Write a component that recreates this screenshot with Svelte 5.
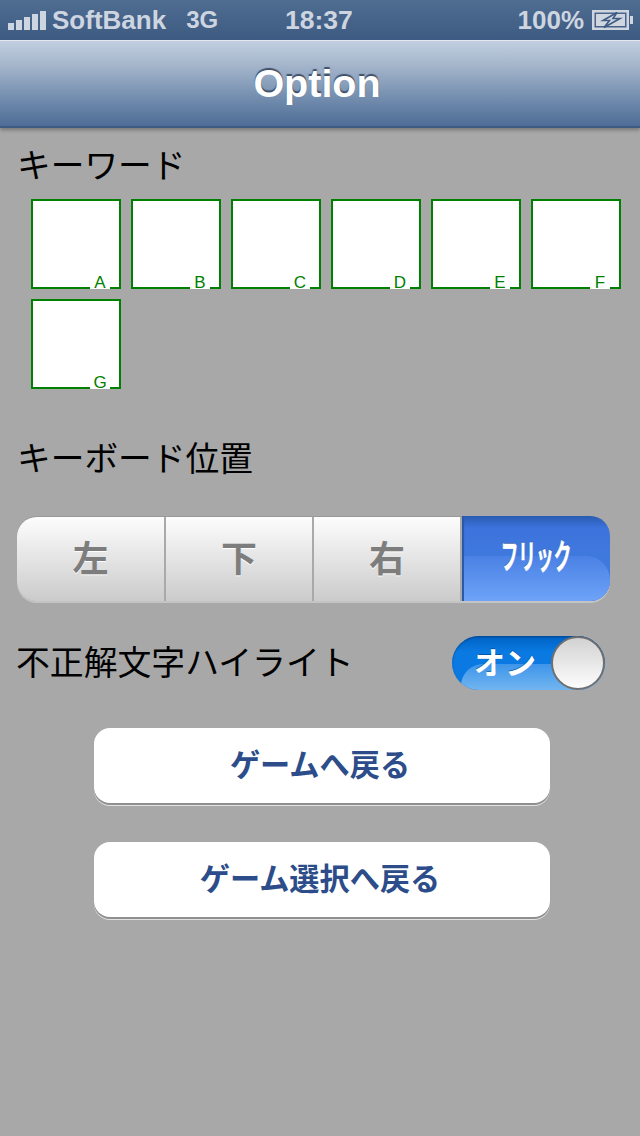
<script>
  const cells = ['A', 'B', 'C', 'D', 'E', 'F', 'G'];
  const segments = ['左', '下', '右'];
</script>

<div class="page">
  <header class="status">
    <div class="left">
      <svg class="signal" width="38" height="20" viewBox="0 0 38 20" aria-hidden="true">
        <rect x="0" y="12" width="6" height="7" />
        <rect x="8" y="9" width="6" height="10" />
        <rect x="16" y="6" width="6" height="13" />
        <rect x="24" y="3" width="6" height="16" />
        <rect x="32" y="0" width="6" height="19" />
      </svg>
      <span class="carrier">SoftBank</span>
      <span class="net">3G</span>
    </div>
    <span class="time">18:37</span>
    <div class="right">
      <span class="pct">100%</span>
      <svg class="battery" width="41" height="20" viewBox="0 0 41 20" aria-hidden="true">
        <path fill="#cfd6e0" fill-rule="evenodd" d="M0 0h37v20H0zM2.500 2.500v15h32v-15z" />
        <path fill="#cfd6e0" d="M4 4h29v12H4z" />
        <path fill="#cfd6e0" d="M38 6h3v8h-3z" />
        <path fill="#cfd6e0" stroke="#3f5c84" stroke-width="1.600" d="M25 2.500 11 10.500h6.500L12 17.500 28 8.500h-7z" />
      </svg>
    </div>
  </header>

  <div class="nav"><h1>Option</h1></div>

  <main class="content">
    <p class="label keyword">キーワード</p>
    <div class="grid">
      {#each cells as c}
        <div class="cell"><span>{c}</span></div>
      {/each}
    </div>

    <p class="label position">キーボード位置</p>
    <div class="segments">
      {#each segments as s}
        <div class="seg"><span class="glyph">{s}</span></div>
      {/each}
      <div class="seg active"><span class="flick">フリック</span></div>
    </div>

    <div class="highlight">
      <p class="label hl-label">不正解文字ハイライト</p>
      <div class="switch">
        <span class="on">オン</span>
        <span class="knob"></span>
      </div>
    </div>

    <button class="action first">ゲームへ戻る</button>
    <button class="action second">ゲーム選択へ戻る</button>
  </main>
</div>

<style>
  :global(body) {
    margin: 0;
    background: #a8a8a8;
  }
  .page {
    width: 640px;
    height: 1136px;
    overflow: hidden;
    background: #a8a8a8;
    font-family: "Noto Sans CJK JP", "Liberation Sans", sans-serif;
  }
  .status {
    height: 40px;
    box-sizing: border-box;
    padding: 0 7px 0 8px;
    position: relative;
    display: flex;
    align-items: center;
    justify-content: space-between;
    background: linear-gradient(#4f6c91, #3d5a82);
    color: #cdd5e0;
    font-family: "Liberation Sans", sans-serif;
    font-weight: 700;
    font-size: 26px;
  }
  .left, .right {
    display: flex;
    align-items: center;
  }
  .signal {
    fill: #cdd5e0;
    margin-right: 6px;
    margin-top: 1px;
  }
  .net {
    font-size: 24px;
    margin-left: 20px;
  }
  .time {
    position: absolute;
    left: 285px;
    top: 5px;
    font-size: 26.500px;
  }
  .pct {
    margin-right: 8px;
  }
  .battery {
    margin-top: -1px;
  }
  .nav {
    height: 88px;
    box-sizing: border-box;
    border-top: 1px solid #e4e9f0;
    background: linear-gradient(#c1cfe0, #a3b4ca 30%, #6f8aac 70%, #4e6c96);
    border-bottom: 2px solid #3f5a80;
    box-shadow: 0 2px 4px rgba(0, 0, 0, 0.3);
    display: flex;
    align-items: center;
    justify-content: center;
  }
  h1 {
    margin: 0 6px 0 0;
    color: #fff;
    font-family: "Liberation Sans", sans-serif;
    font-weight: 700;
    font-size: 39.500px;
    text-shadow: 0 -2px 1px #3f4f68;
  }
  .content {
    padding: 0 0 0 18px;
  }
  .label {
    margin: 0;
    font-size: 33.700px;
    line-height: 46px;
    color: #000;
  }
  .keyword {
    padding-top: 13px;
    margin-left: -1px;
  }
  .grid {
    display: flex;
    flex-wrap: wrap;
    gap: 10px;
    width: 600px;
    margin: 12px 0 0 13px;
  }
  .cell {
    width: 90px;
    height: 90px;
    box-sizing: border-box;
    border: 2px solid #008000;
    background: #fff;
    position: relative;
  }
  .cell span {
    position: absolute;
    right: 9px;
    bottom: -2px;
    width: 20px;
    height: 14px;
    background: #fff;
    text-align: center;
    color: #008000;
    font-family: "Liberation Sans", sans-serif;
    font-size: 17px;
    line-height: 16px;
  }
  .position {
    margin: 45px 0 0 -1px;
  }
  .segments {
    display: flex;
    width: 593px;
    height: 85px;
    margin: 36px 0 0 -1px;
    box-sizing: border-box;
    border-radius: 20px;
    box-shadow: 0 2px 0 #c4c4c4;
    border-top: 1px solid #999;
  }
  .seg {
    width: 149px;
    box-sizing: border-box;
    display: flex;
    align-items: center;
    justify-content: center;
    border-right: 2px solid #a9a9a9;
    background: linear-gradient(#fdfdfd, #cbcbcb);
    color: #7d7d7d;
    font-size: 36px;
    font-weight: 700;
    text-shadow: 0 1px 0 #fff;
  }
  .seg:nth-child(2) {
    width: 148px;
  }
  .seg:nth-child(3) {
    width: 148px;
  }
  .seg:first-child {
    border-radius: 20px 0 0 20px;
  }
  .glyph {
    padding-bottom: 6px;
  }
  .active {
    width: 148px;
    position: relative;
    overflow: hidden;
    margin-top: -1px;
    border-right: 0;
    border-radius: 0 20px 20px 0;
    background: linear-gradient(#2a5cb2, #3c73dc 14%, #4079de 48%);
    color: #fff;
    text-shadow: 0 -1px 0 #2a4f99;
    box-shadow: inset 2px 0 1px #2a57a8;
  }
  .active::after {
    content: "";
    position: absolute;
    left: 2px;
    right: 0;
    bottom: 0;
    height: 45px;
    border-radius: 0 24px 0 0;
    background: linear-gradient(#4a81e4, #6ea3f8);
  }
  .flick {
    position: relative;
    z-index: 1;
    display: block;
    transform: scaleX(0.52);
    font-size: 34px;
    padding-bottom: 8px;
    white-space: nowrap;
    -webkit-text-stroke: 0.600px #fff;
  }
  .highlight {
    display: flex;
    justify-content: space-between;
    align-items: center;
    width: 589px;
    margin: 35px 0 0 -2px;
    height: 54px;
  }
  .hl-label {
    padding-bottom: 4px;
    font-size: 33.850px;
  }
  .switch {
    width: 153px;
    height: 54px;
    box-sizing: border-box;
    border-radius: 27px;
    overflow: hidden;
    background: linear-gradient(#0062c4, #0a7ae2 30%, #0a7ae2);
    box-shadow: inset 0 1px 2px rgba(0, 40, 90, 0.5);
    position: relative;
    display: flex;
    align-items: center;
  }
  .switch::after {
    content: "";
    position: absolute;
    left: 9px;
    right: 0;
    bottom: 0;
    height: 26px;
    border-radius: 22px 0 0 0;
    background: linear-gradient(#3d95ea, #72b5f0);
  }
  .on {
    position: relative;
    z-index: 1;
    margin-left: 22px;
    padding-bottom: 6px;
    color: #fff;
    font-size: 31px;
    font-weight: 700;
    text-shadow: 0 -1px 0 rgba(0, 50, 110, 0.5);
  }
  .knob {
    position: absolute;
    z-index: 1;
    right: 0;
    top: 0;
    width: 54px;
    height: 54px;
    box-sizing: border-box;
    border-radius: 50%;
    border: 2px solid #6f6f6f;
    background: linear-gradient(#d2d2d2, #fdfdfd);
  }
  .action {
    display: block;
    width: 456px;
    height: 75px;
    margin-left: 76px;
    padding: 0 4px 6px 0;
    border: 0;
    border-radius: 16px;
    background: #fff;
    box-shadow: 0 2px 0 #8f8f8f, 0 3px 0 #e2e2e2;
    color: #2c4d8a;
    font-family: inherit;
    font-size: 30.200px;
    font-weight: 700;
  }
  .first {
    margin-top: 38px;
  }
  .second {
    margin-top: 39px;
  }
</style>
